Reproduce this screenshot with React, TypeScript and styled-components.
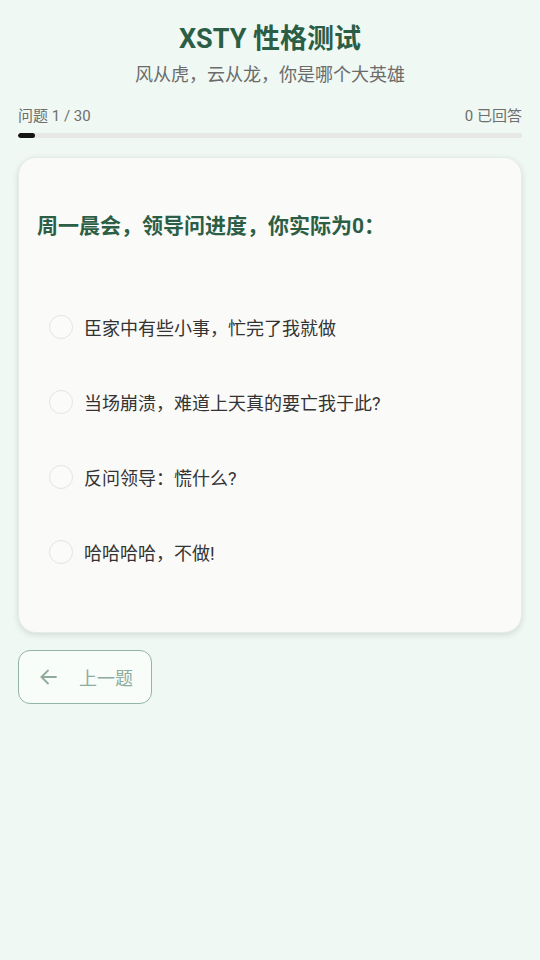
import React from "react";
import styled, { createGlobalStyle } from "styled-components";

const Global = createGlobalStyle`
  html, body { margin: 0; padding: 0; background: #eff8f3; }
  body { font-family: Roboto, "Noto Sans CJK SC", sans-serif; }
  * { box-sizing: border-box; }
`;

const Page = styled.div`
  padding: 18px 18px 40px;
  min-height: 960px;
  background: #eff8f3;
`;

const Header = styled.header`
  display: flex;
  flex-direction: column;
  align-items: center;
`;

const Title = styled.h1`
  margin: 0;
  font-size: 27px;
  line-height: 42px;
  font-weight: 700;
  color: #2b5e45;
`;

const Subtitle = styled.p`
  margin: 0;
  font-size: 18px;
  line-height: 30px;
  color: #6b6b6b;
`;

const ProgressWrap = styled.div`
  margin-top: 16px;
`;

const ProgressLabels = styled.div`
  display: flex;
  justify-content: space-between;
  font-size: 15px;
  line-height: 20px;
  color: #6e6e6e;
`;

const Track = styled.div`
  margin-top: 7px;
  height: 5px;
  border-radius: 3px;
  background: #e6e7e6;
  overflow: hidden;
`;

const Fill = styled.div`
  height: 100%;
  background: #141414;
  border-radius: 3px;
`;

const Card = styled.section`
  margin-top: 19px;
  background: #fafaf9;
  border: 1px solid #e4ece7;
  border-radius: 18px;
  box-shadow: 0 2px 6px rgba(0, 0, 0, 0.12);
  padding: 53px 18px 43px;
`;

const Question = styled.h2`
  margin: 0;
  font-size: 21px;
  line-height: 30px;
  font-weight: 700;
  color: #2b5e45;
`;

const Options = styled.div`
  margin-top: 48px;
  display: flex;
  flex-direction: column;
`;

const Option = styled.label`
  display: flex;
  align-items: center;
  gap: 11px;
  height: 75px;
  padding-left: 12px;
  font-size: 18px;
  color: #333333;
  cursor: pointer;
`;

const Radio = styled.span`
  width: 24px;
  height: 24px;
  border-radius: 50%;
  border: 1.5px solid #e3e4e3;
  background: #fbfbfa;
  flex: none;
`;

const BackButton = styled.button`
  margin-top: 17px;
  display: inline-flex;
  align-items: center;
  gap: 22px;
  height: 54px;
  padding: 0 18px 0 21px;
  border: 1px solid #93b5a4;
  border-radius: 12px;
  background: #f8fdfa;
  color: #8eab9c;
  font-family: Roboto, "Noto Sans CJK SC", sans-serif;
  font-size: 18px;
  white-space: nowrap;
`;

const options = [
  "臣家中有些小事，忙完了我就做",
  "当场崩溃，难道上天真的要亡我于此?",
  "反问领导：慌什么?",
  "哈哈哈哈，不做!",
];

export default function App() {
  const current = 1;
  const total = 30;
  return (
    <>
      <Global />
      <Page>
        <Header>
          <Title>XSTY 性格测试</Title>
          <Subtitle>风从虎，云从龙，你是哪个大英雄</Subtitle>
        </Header>
        <ProgressWrap>
          <ProgressLabels>
            <span>问题 {current} / {total}</span>
            <span>0 已回答</span>
          </ProgressLabels>
          <Track>
            <Fill style={{ width: `${(current / total) * 100}%` }} />
          </Track>
        </ProgressWrap>
        <Card>
          <Question>周一晨会，领导问进度，你实际为0：</Question>
          <Options>
            {options.map((o) => (
              <Option key={o}>
                <Radio />
                <span>{o}</span>
              </Option>
            ))}
          </Options>
        </Card>
        <BackButton>
          <svg width="17" height="16" viewBox="0 0 17 16" fill="none" stroke="#8eab9c" strokeWidth="1.8" strokeLinecap="round" strokeLinejoin="round">
            <path d="M16 8H1.5" />
            <path d="M8 1.5L1.5 8 8 14.5" />
          </svg>
          <span>上一题</span>
        </BackButton>
      </Page>
    </>
  );
}
